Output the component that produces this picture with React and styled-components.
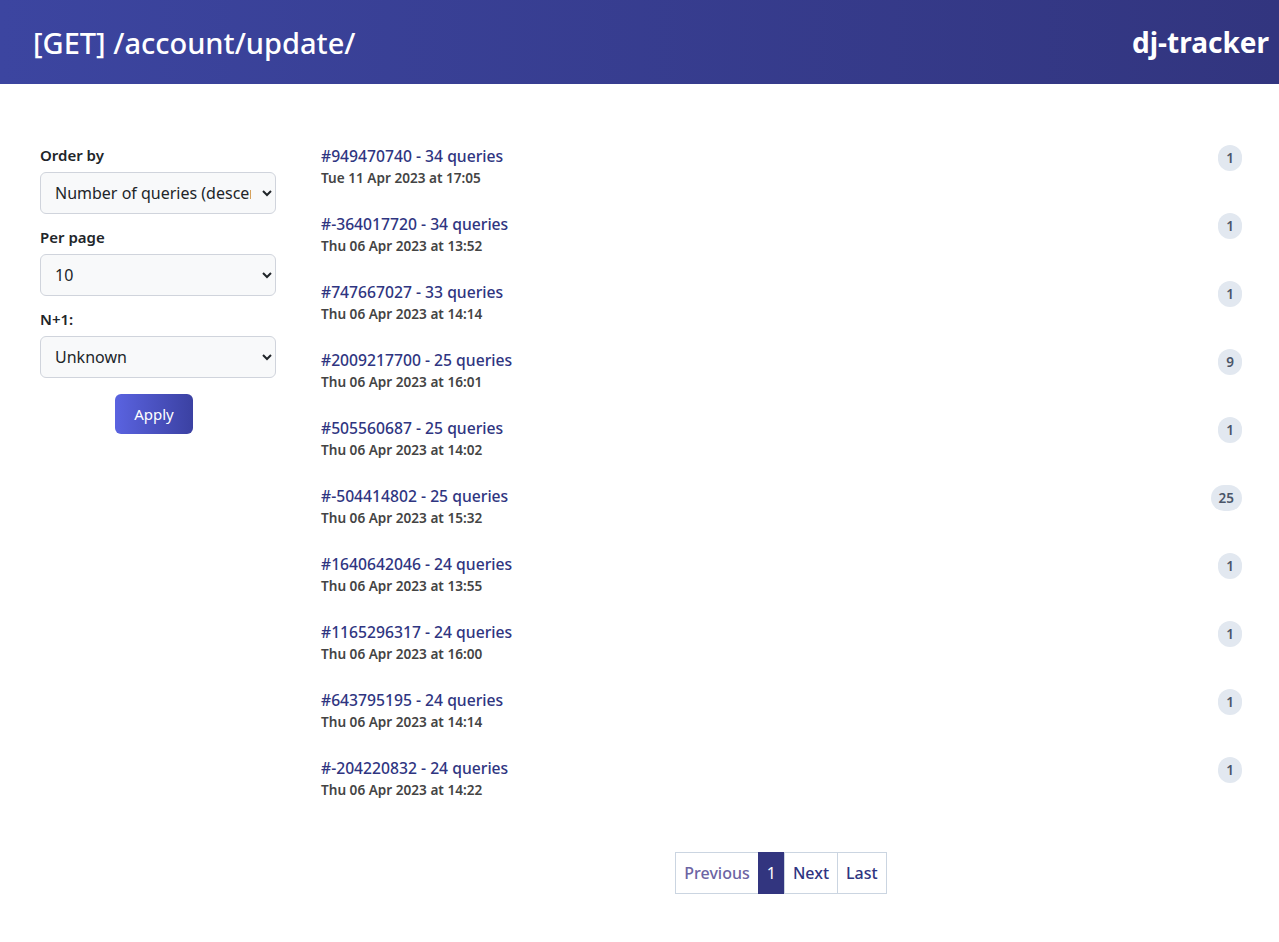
import React from 'react';
import styled, { createGlobalStyle } from 'styled-components';

const GlobalStyle = createGlobalStyle`
  body {
    margin: 0;
    font-family: "Noto Sans", "DejaVu Sans", sans-serif;
    background: #ffffff;
    color: #212529;
  }
`;

const requests = [
  { id: '949470740', queries: 34, date: 'Tue 11 Apr 2023 at 17:05', count: 1 },
  { id: '-364017720', queries: 34, date: 'Thu 06 Apr 2023 at 13:52', count: 1 },
  { id: '747667027', queries: 33, date: 'Thu 06 Apr 2023 at 14:14', count: 1 },
  { id: '2009217700', queries: 25, date: 'Thu 06 Apr 2023 at 16:01', count: 9 },
  { id: '505560687', queries: 25, date: 'Thu 06 Apr 2023 at 14:02', count: 1 },
  { id: '-504414802', queries: 25, date: 'Thu 06 Apr 2023 at 15:32', count: 25 },
  { id: '1640642046', queries: 24, date: 'Thu 06 Apr 2023 at 13:55', count: 1 },
  { id: '1165296317', queries: 24, date: 'Thu 06 Apr 2023 at 16:00', count: 1 },
  { id: '643795195', queries: 24, date: 'Thu 06 Apr 2023 at 14:14', count: 1 },
  { id: '-204220832', queries: 24, date: 'Thu 06 Apr 2023 at 14:22', count: 1 },
];

const Header = styled.header`
  height: 84px;
  display: flex;
  align-items: center;
  justify-content: space-between;
  padding: 0 10px 0 33px;
  background: linear-gradient(90deg, #3c45a0 0%, #32357f 100%);
  color: #ffffff;
`;

const Title = styled.h1`
  margin: 0;
  font-size: 29px;
  font-weight: 500;
`;

const Brand = styled.div`
  font-size: 28px;
  font-weight: 700;
`;

const Main = styled.main`
  display: flex;
  gap: 45px;
  padding: 49px 37px 0 40px;
`;

const Sidebar = styled.form`
  width: 236px;
  flex-shrink: 0;
  display: flex;
  flex-direction: column;
`;

const Label = styled.label`
  font-size: 15px;
  font-weight: 600;
  color: #212529;
  margin-top: ${(p) => (p.$first ? '12px' : '13px')};
  margin-bottom: 7px;
`;

const Select = styled.select`
  height: 42px;
  width: 100%;
  padding: 0 8px 0 10px;
  font-family: inherit;
  font-size: 16px;
  color: #212529;
  background: #f8f9fa;
  border: 1px solid #d0d4dc;
  border-radius: 6px;
`;

const ApplyButton = styled.button`
  align-self: center;
  margin: 16px 8px 0 0;
  width: 78px;
  height: 40px;
  border: none;
  border-radius: 6px;
  background: linear-gradient(90deg, #5a63e0 0%, #3b41a2 100%);
  color: #ffffff;
  font-family: inherit;
  font-size: 15px;
`;

const Content = styled.section`
  flex: 1;
  display: flex;
  flex-direction: column;
  padding-top: 6px;
`;

const List = styled.ul`
  list-style: none;
  margin: 0;
  padding: 0;
`;

const Row = styled.li`
  height: 68px;
  display: flex;
  justify-content: space-between;
  align-items: flex-start;
  padding-top: 6px;
  box-sizing: border-box;
`;

const Info = styled.div`
  display: flex;
  flex-direction: column;
`;

const ReqLink = styled.a`
  font-size: 15.7px;
  font-weight: 500;
  color: #2f3581;
  text-decoration: none;
  line-height: 22px;
`;

const DateText = styled.span`
  font-size: 13.6px;
  font-weight: 600;
  color: #444444;
  line-height: 22px;
`;

const Badge = styled.span`
  min-width: 24px;
  height: 26px;
  padding: 0 ${(p) => (p.$wide ? '8px' : '4px')};
  box-sizing: border-box;
  border-radius: 13px;
  background: #e2e8f0;
  color: #4a5568;
  font-size: 13.5px;
  font-weight: 600;
  display: flex;
  align-items: center;
  justify-content: center;
`;

const Pagination = styled.nav`
  display: flex;
  justify-content: center;
  margin-top: 33px;
`;

const PageItem = styled.a`
  height: 42px;
  padding: 0 8px;
  display: flex;
  align-items: center;
  box-sizing: border-box;
  border: 1px solid #cbd5e1;
  margin-left: -1px;
  font-size: 16px;
  text-decoration: none;
  color: ${(p) => (p.$active ? '#ffffff' : p.$disabled ? '#6c64a3' : '#2f3581')};
  background: ${(p) => (p.$active ? '#32357f' : '#ffffff')};
  border-color: ${(p) => (p.$active ? '#32357f' : '#cbd5e1')};
  font-weight: ${(p) => (p.$active ? 400 : 500)};
`;

export default function App() {
  return (
    <>
      <GlobalStyle />
      <Header>
        <Title>[GET] /account/update/</Title>
        <Brand>dj-tracker</Brand>
      </Header>
      <Main>
        <Sidebar>
          <Label $first>Order by</Label>
          <Select defaultValue="desc">
            <option value="desc">Number of queries (descending)</option>
          </Select>
          <Label>Per page</Label>
          <Select defaultValue="10">
            <option value="10">10</option>
          </Select>
          <Label>N+1:</Label>
          <Select defaultValue="unknown">
            <option value="unknown">Unknown</option>
          </Select>
          <ApplyButton type="button">Apply</ApplyButton>
        </Sidebar>
        <Content>
          <List>
            {requests.map((r) => (
              <Row key={r.id}>
                <Info>
                  <ReqLink href="#">#{r.id} - {r.queries} queries</ReqLink>
                  <DateText>{r.date}</DateText>
                </Info>
                <Badge $wide={r.count > 9}>{r.count}</Badge>
              </Row>
            ))}
          </List>
          <Pagination>
            <PageItem $disabled>Previous</PageItem>
            <PageItem $active>1</PageItem>
            <PageItem>Next</PageItem>
            <PageItem>Last</PageItem>
          </Pagination>
        </Content>
      </Main>
    </>
  );
}
